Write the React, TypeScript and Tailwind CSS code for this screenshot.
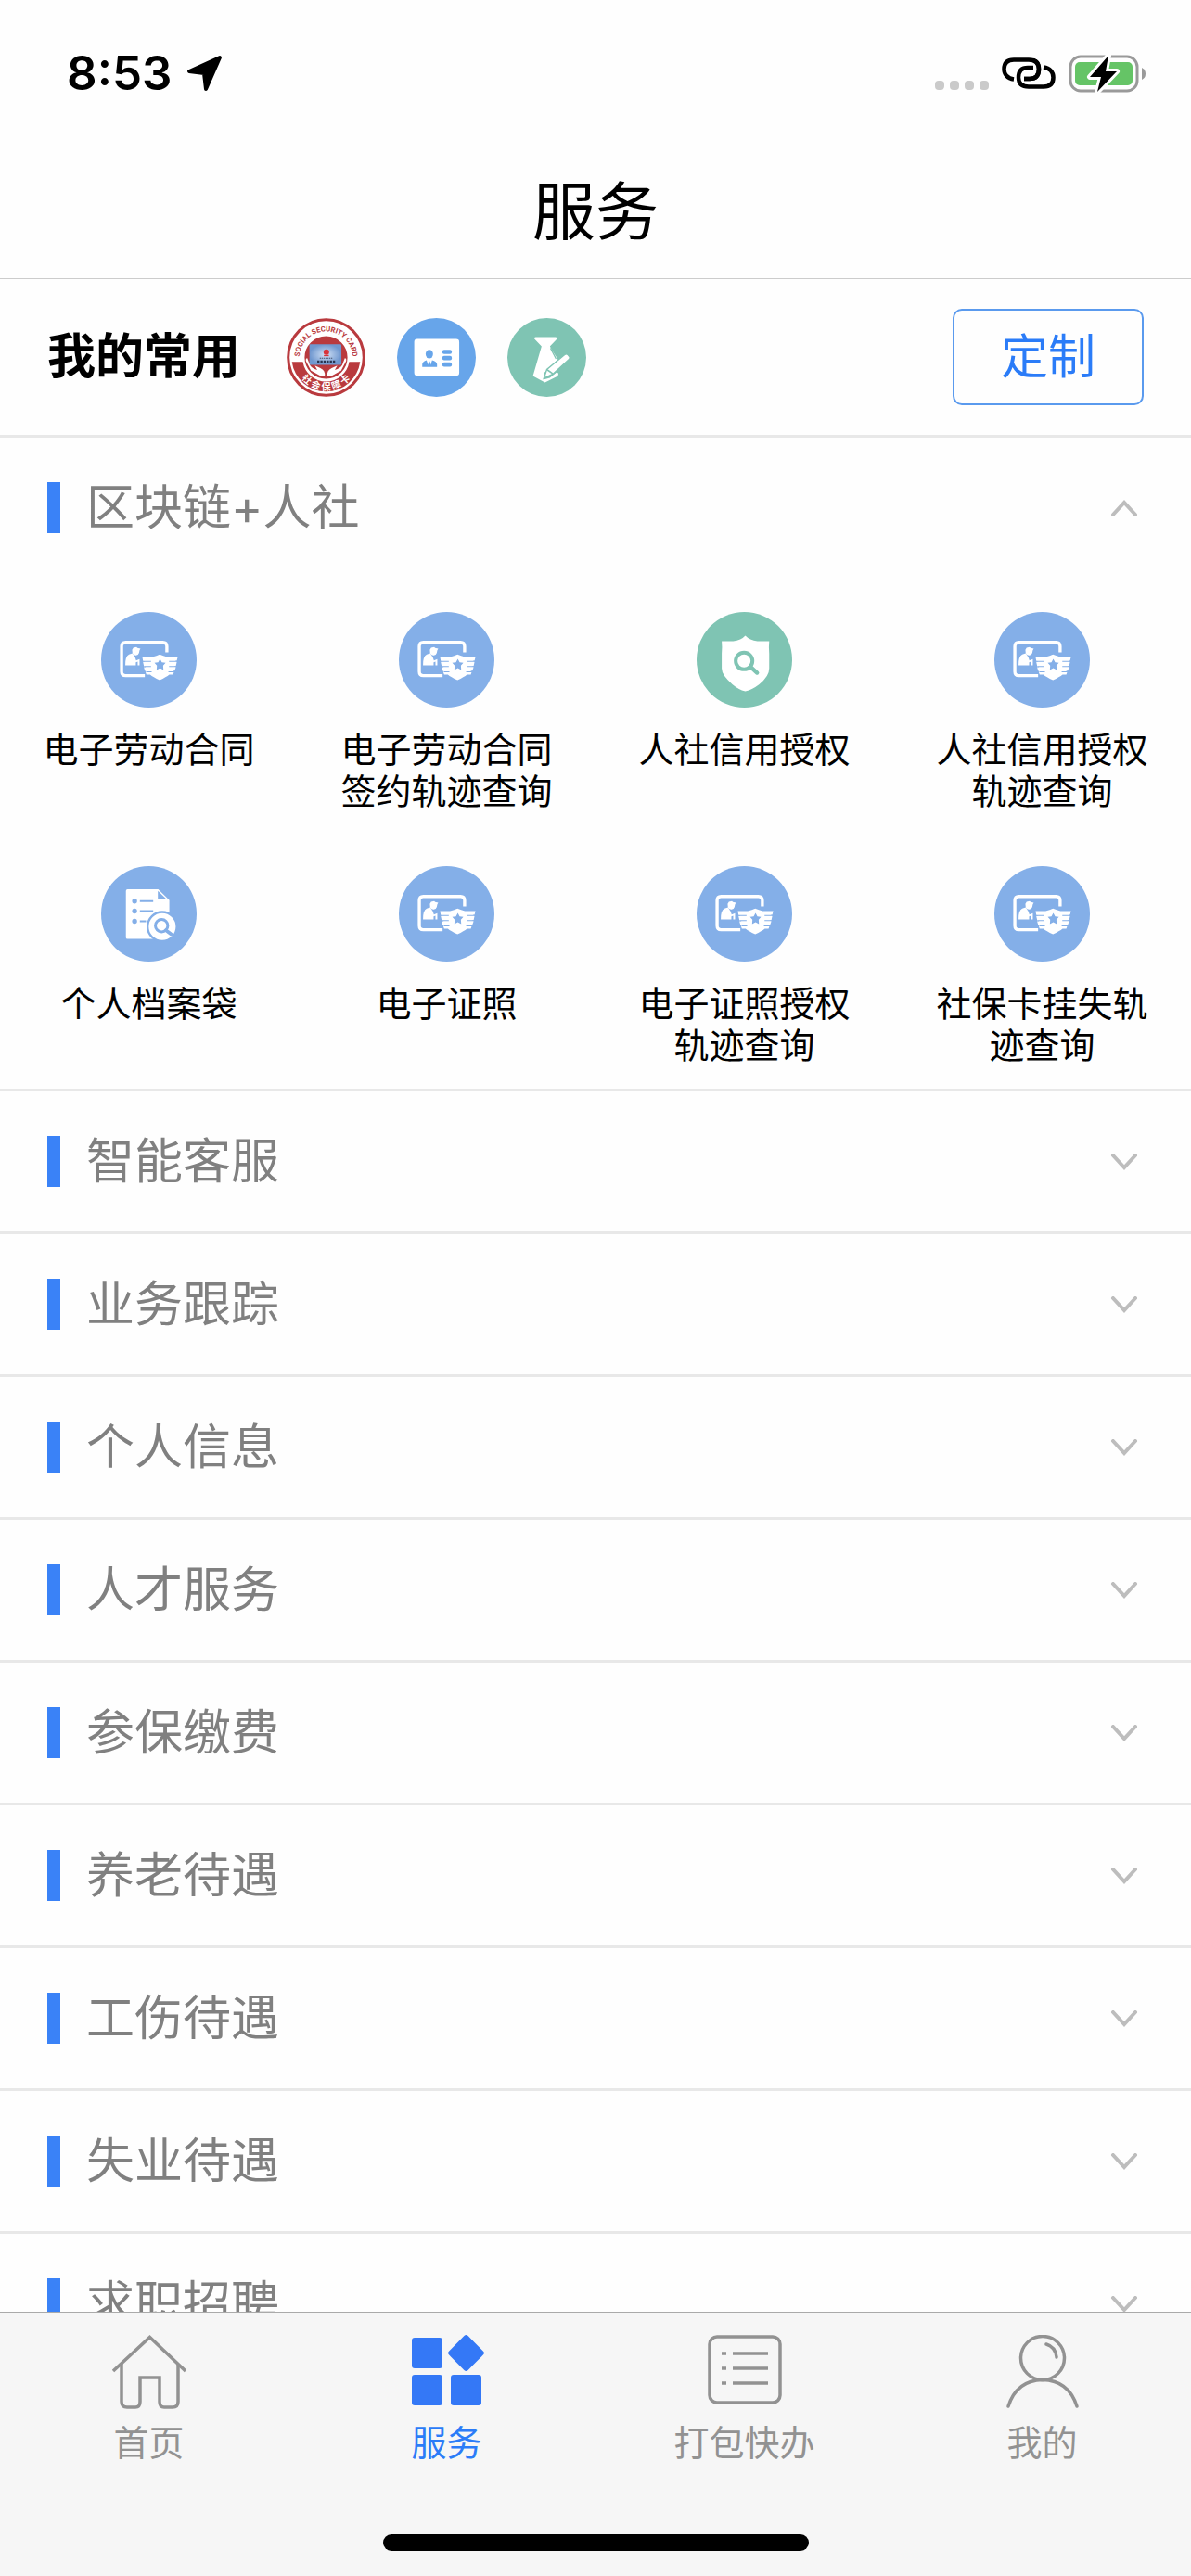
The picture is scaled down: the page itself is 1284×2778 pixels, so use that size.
import { useState } from "react"
import type { ReactNode } from "react"

function SealIcon() {
  return (
    <svg viewBox="0 0 252 252" className="size-[85px]" aria-hidden="true">
      <defs>
        <path id="seal-top" d="M44 150 A85 85 0 1 1 208 150" />
        <path id="seal-bottom" d="M22 126 A104 104 0 0 0 230 126" />
        <radialGradient id="seal-screen">
          <stop offset="0" stopColor="#d3e2f6" />
          <stop offset="1" stopColor="#6f97cf" />
        </radialGradient>
      </defs>
      <circle cx="126" cy="126" r="121" fill="#fff" stroke="#b93a3e" strokeWidth="9" />
      <path d="M17 140 A110 110 0 0 0 235 140 L200 140 A75 75 0 0 1 52 140 Z" fill="#b93a3e" />
      <circle cx="126" cy="126" r="71" fill="#b93a3e" stroke="#fff" strokeWidth="5" />
      <rect x="73" y="84" width="102" height="66" rx="4" fill="url(#seal-screen)" />
      <circle cx="127" cy="109" r="9" fill="#d8343b" />
      <path d="M119 120 h16" stroke="#d8343b" strokeWidth="4" />
      <path d="M106 128 h42" stroke="#44526e" strokeWidth="3" strokeDasharray="4 2" />
      <path d="M98 139 h60" stroke="#28334f" strokeWidth="6" strokeDasharray="7 3" />
      <path d="M66 128 q-6 0 -4 10 l16 30 l28 16 l16 0 q2 -16 -14 -24 l-18 -8 l8 14 q-18 -4 -24 -16 z" fill="#fff" />
      <path d="M186 128 q6 0 4 10 l-16 30 l-28 16 l-16 0 q-2 -16 14 -24 l18 -8 l-8 14 q18 -4 24 -16 z" fill="#fff" />
      <text fill="#b93a3e" fontSize="23" fontWeight="700" fontFamily="Roboto, sans-serif">
        <textPath href="#seal-top" startOffset="50%" textAnchor="middle">SOCIAL SECURITY CARD</textPath>
      </text>
      <text fill="#fff" fontSize="30" fontWeight="700" fontFamily="Noto Sans CJK SC, sans-serif">
        <textPath href="#seal-bottom" startOffset="50%" textAnchor="middle">社 会 保 障 卡</textPath>
      </text>
    </svg>
  )
}

function IdCardIcon() {
  return (
    <svg viewBox="0 0 256 256" className="size-[85px]" aria-hidden="true">
      <circle cx="128" cy="128" r="128" fill="#67a5ea" />
      <rect x="56" y="68" width="146" height="120" rx="10" fill="#fff" />
      <g fill="#67a5ea">
        <ellipse cx="105" cy="117" rx="12" ry="14" />
        <path d="M82 159 v-9 q1 -9 14 -13 l5 15 l2 -11 h4 l2 11 l5 -15 q15 4 16 13 v9 z" />
        <rect x="147" y="103" width="31" height="14" rx="6" />
        <rect x="147" y="123" width="31" height="14" rx="6" />
        <rect x="147" y="144" width="31" height="14" rx="6" />
      </g>
    </svg>
  )
}

function TieIcon() {
  return (
    <svg viewBox="0 0 256 256" className="size-[85px]" aria-hidden="true">
      <circle cx="128" cy="128" r="128" fill="#7fc4b3" />
      <path d="M92 62 h64 q8 0 5 6 l-23 24 l8 14 l18 28 l-44 44 l-4 22 l22 -6 l22 -18 l6 4 l-2 8 l-42 21 l-39 -21 l28 -96 l-23 -24 q-3 -6 4 -6 z" fill="#fff" />
      <path d="M140 98 l18 34" stroke="#7fc4b3" strokeWidth="4" />
      <path d="M186 119 q5 -5 10 0 l5 6 q4 5 -1 9 l-51 47 l-30 14 l9 -28 z" fill="#fff" stroke="#7fc4b3" strokeWidth="4" />
      <path d="M129 168 l19 13" stroke="#7fc4b3" strokeWidth="5" />
    </svg>
  )
}

function ContractIcon() {
  return (
    <svg viewBox="0 0 308 308" className="size-[103px]" aria-hidden="true">
      <circle cx="154" cy="154" r="154" fill="#84afe8" />
      <path d="M141 205 H79 q-13 0 -13 -13 V111 q0 -13 13 -13 H199 q13 0 13 13 V130" fill="none" stroke="#fff" strokeWidth="10" />
      <path d="M100 122 l4 -7 l10 -2 l3 3 l10 2 l-3 5 l-2 9 q-3 9 -11 8 q-8 0 -10 -8 z" fill="#fff" />
      <path d="M78 172 q-1 -28 12 -35 l11 -4 q10 13 12 23 l11 -4 v20 h-6 v-12 l-6 2 v10 z" fill="#fff" />
      <path d="M133 145 h32 q14 -3 24 -8 q12 5 24 8 h34 l-3 12 h-5 l5 4 l-3 13 h-5 l5 4 l-4 11 h-6 l4 4 l-3 9 h-12 q-10 8 -31 18 q-22 -10 -31 -18 h-12 l-3 -9 h5 l-7 -4 l-3 -11 h7 l-7 -4 l-3 -13 h6 l-6 -4 z" fill="#fff" />
      <path d="M136 159 h25 M140 176 h21 M146 193 h17 M219 159 h26 M219 176 h22 M217 193 h19" stroke="#84afe8" strokeWidth="3" />
      <path d="M190 151 l6 11 l12 2 l-8 9 l1 14 l-11 -6 l-11 6 l1 -14 l-8 -9 l12 -2 z" fill="#84afe8" />
    </svg>
  )
}

function ShieldSearchIcon() {
  return (
    <svg viewBox="0 0 308 308" className="size-[103px]" aria-hidden="true">
      <circle cx="154" cy="154" r="154" fill="#7fc4b3" />
      <path d="M157 76 q14 15 39 18 h38 q-2 20 0 40 v48 q0 26 -32 51 q-22 17 -45 23 q-22 -6 -42 -23 q-34 -29 -34 -51 v-48 q2 -20 0 -40 h37 q26 -3 39 -18 z" fill="#fff" />
      <circle cx="153" cy="158" r="27" fill="none" stroke="#7fc4b3" strokeWidth="12" />
      <path d="M173 176 l22 20" stroke="#7fc4b3" strokeWidth="13" strokeLinecap="round" />
    </svg>
  )
}

function ArchiveIcon() {
  return (
    <svg viewBox="0 0 308 308" className="size-[103px]" aria-hidden="true">
      <circle cx="154" cy="154" r="154" fill="#84afe8" />
      <path d="M85 75 H184 L220 110 V235 H85 q-5 0 -5 -5 V80 q0 -5 5 -5 z" fill="#fff" />
      <path d="M183 80 V103 q0 5 5 5 H212 z" fill="#84afe8" />
      <g fill="#84afe8">
        <circle cx="108" cy="113" r="8" />
        <circle cx="108" cy="145" r="8" />
        <circle cx="108" cy="178" r="8" />
      </g>
      <path d="M125 113 h43 M125 145 h43 M125 178 h20" stroke="#84afe8" strokeWidth="6" />
      <circle cx="197" cy="195" r="47" fill="#fff" stroke="#84afe8" strokeWidth="7" />
      <circle cx="195" cy="192" r="20" fill="none" stroke="#84afe8" strokeWidth="9" />
      <path d="M209 207 l17 13" stroke="#84afe8" strokeWidth="11" strokeLinecap="round" />
    </svg>
  )
}

function Chevron({ open }: { open: boolean }) {
  return (
    <svg viewBox="0 0 30 18" className="h-[18px] w-[30px]" aria-hidden="true">
      <path
        d={open ? "M3 16 L15 3 L27 16" : "M3 2 L15 15 L27 2"}
        fill="none"
        stroke="#bdbdbd"
        strokeWidth="4"
        strokeLinecap="round"
      />
    </svg>
  )
}

function StatusBar() {
  return (
    <div className="flex items-center justify-between pt-[54px] pr-12 pl-[72px]">
      <div className="flex items-center gap-4">
        <span className="text-[51px] leading-[50px] font-semibold">8:53</span>
        <svg viewBox="0 0 40 40" className="size-10" aria-hidden="true">
          <path d="M36 3 L3 18 L19 20 L21 37 Z" fill="#000" stroke="#000" strokeWidth="4" strokeLinejoin="round" />
        </svg>
      </div>
      <div className="flex items-center">
        <div className="mt-[26px] mr-[14px] flex gap-[6px]">
          {[0, 1, 2, 3].map((dot) => (
            <span key={dot} className="size-[10px] rounded-[4px] bg-[#cacaca]" />
          ))}
        </div>
        <svg viewBox="0 0 58 34" className="mr-[14px] h-[34px] w-[58px]" aria-hidden="true">
          <g fill="none" stroke="#000" strokeWidth="4.5">
            <path d="M13 23.5 C6 22.5 2.5 18 2.5 12.5 Q2.5 2.5 13 2.5 H29 Q40 2.5 40 12.5 Q40 23 30 23 H24" />
            <path d="M45 10.5 C52 11.5 55.5 16 55.5 21.5 Q55.5 31.5 45 31.5 H29 Q18 31.5 18 21.5 Q18 11 28 11 H34" stroke="#fff" strokeWidth="8" />
            <path d="M45 10.5 C52 11.5 55.5 16 55.5 21.5 Q55.5 31.5 45 31.5 H29 Q18 31.5 18 21.5 Q18 11 28 11 H34" />
            <path d="M34 2.9 Q40 5 40 12.5 Q40 23 30 23 H24" />
          </g>
        </svg>
        <svg viewBox="0 0 84 41" className="h-[41px] w-[84px]" aria-hidden="true">
          <rect x="2" y="2" width="72" height="37" rx="11" fill="none" stroke="#9a9a9a" strokeWidth="3" />
          <path d="M79 14 q4 2 4 6.500 q0 4.500 -4 6.500 z" fill="#9a9a9a" />
          <rect x="7" y="8" width="62" height="25" rx="5" fill="#65c466" />
          <path
            d="M43 1 L23 24 H35 L31 40 L52 18 H40 Z"
            fill="#000"
            stroke="#fff"
            strokeWidth="6"
            strokeLinejoin="round"
            paintOrder="stroke"
          />
        </svg>
      </div>
    </div>
  )
}

const services: { label: string; icon: ReactNode }[] = [
  { label: "电子劳动合同", icon: <ContractIcon /> },
  { label: "电子劳动合同签约轨迹查询", icon: <ContractIcon /> },
  { label: "人社信用授权", icon: <ShieldSearchIcon /> },
  { label: "人社信用授权轨迹查询", icon: <ContractIcon /> },
  { label: "个人档案袋", icon: <ArchiveIcon /> },
  { label: "电子证照", icon: <ContractIcon /> },
  { label: "电子证照授权轨迹查询", icon: <ContractIcon /> },
  { label: "社保卡挂失轨迹查询", icon: <ContractIcon /> },
]

const sections = [
  "区块链+人社",
  "智能客服",
  "业务跟踪",
  "个人信息",
  "人才服务",
  "参保缴费",
  "养老待遇",
  "工伤待遇",
  "失业待遇",
  "求职招聘",
]

const tabs: { label: string; icon: ReactNode }[] = [
  {
    label: "首页",
    icon: (
      <svg viewBox="0 0 80 80" className="size-20" fill="none" stroke="currentColor" strokeWidth="3.5" aria-hidden="true">
        <path d="M1 39 L40.500 2.500 L79 39" />
        <path d="M10 31 V72 Q10 78 16 78 H25 Q30 78 30 72 V46 H51 V72 Q51 78 56 78 H65 Q71 78 71 72 V31" />
      </svg>
    ),
  },
  {
    label: "服务",
    icon: (
      <svg viewBox="0 0 80 80" className="size-20" fill="#3478f6" aria-hidden="true">
        <rect x="2" y="3" width="33" height="33" rx="3" />
        <rect x="2" y="43" width="33" height="33" rx="3" />
        <rect x="44" y="43" width="33" height="33" rx="3" />
        <rect x="46" y="5" width="29" height="29" rx="3" transform="rotate(45 60.500 19.500)" />
      </svg>
    ),
  },
  {
    label: "打包快办",
    icon: (
      <svg viewBox="0 0 80 80" className="size-20" fill="none" stroke="currentColor" strokeWidth="3.5" aria-hidden="true">
        <rect x="2" y="2" width="76" height="71" rx="8" />
        <path d="M15 20 h5 M27 20 h38 M15 36 h5 M27 36 h38 M15 52 h5 M27 52 h38" />
      </svg>
    ),
  },
  {
    label: "我的",
    icon: (
      <svg viewBox="0 0 80 80" className="size-20" fill="none" stroke="currentColor" strokeWidth="3.5" strokeLinecap="round" aria-hidden="true">
        <circle cx="40" cy="25" r="23.500" />
        <path d="M3 77 Q12 49 40 48.500 Q68 49 77 77" />
        <path d="M44 10 Q54 13 55 24" />
      </svg>
    ),
  },
]

export default function App() {
  const [openSection, setOpenSection] = useState("区块链+人社")
  const [activeTab, setActiveTab] = useState("服务")

  return (
    <div className="flex h-screen flex-col overflow-hidden bg-[#fefefe] font-[Inter,'Noto_Sans_CJK_SC',sans-serif] text-black">
      <header className="shrink-0 border-b border-[#cccccc] pb-8">
        <StatusBar />
        <h1 className="pt-[84px] text-center text-[68px] leading-[80px]">服务</h1>
      </header>

      <main className="min-h-0 flex-1 overflow-y-auto [scrollbar-width:none]">
        <section className="flex items-center justify-between border-b-[3px] border-[#e8e8e8] px-[51px] py-8">
          <div className="flex items-center gap-[34px]">
            <h2 className="mr-4 text-[52px] leading-[60px] font-bold">我的常用</h2>
            <a href="#card" aria-label="社会保障卡"><SealIcon /></a>
            <a href="#identity" aria-label="个人信息"><IdCardIcon /></a>
            <a href="#jobs" aria-label="求职招聘"><TieIcon /></a>
          </div>
          <button className="rounded-[10px] border-2 border-[#5a9aee] px-[50px] py-5 text-[51px] leading-[60px] text-[#2b7cf8]">
            定制
          </button>
        </section>

        {sections.map((title) => {
          const open = openSection === title
          return (
            <section key={title} className="border-b-[3px] border-[#e8e8e8]">
              <button
                className="flex h-[151px] w-full items-center pr-[57px] pl-[51px]"
                aria-expanded={open}
                onClick={() => setOpenSection(open ? "" : title)}
              >
                <span className="mr-7 h-[55px] w-[14px] bg-[#3a82f7]" />
                <span className="flex-1 text-left text-[52px] leading-[60px] text-[#808080]">{title}</span>
                <Chevron open={open} />
              </button>
              {open && (
                <div className="grid grid-cols-4 gap-y-[58px] pt-[37px] pb-6">
                  {services.map((item) => (
                    <a key={item.label} href="#service" className="flex flex-col items-center gap-[23px]">
                      {item.icon}
                      <span className="h-[90px] w-[240px] text-center text-[38px] leading-[45px]">{item.label}</span>
                    </a>
                  ))}
                </div>
              )}
            </section>
          )
        })}
      </main>

      <nav className="shrink-0 border-t border-[#aaaaaa] bg-[#f6f6f6] pt-6 pb-[27px]">
        <div className="grid grid-cols-4">
          {tabs.map((tab) => (
            <button
              key={tab.label}
              className={`flex flex-col items-center gap-[14px] ${activeTab === tab.label ? "text-[#2b7cf8]" : "text-[#929292]"}`}
              onClick={() => setActiveTab(tab.label)}
            >
              {tab.icon}
              <span className="text-[38px] leading-[45px]">{tab.label}</span>
            </button>
          ))}
        </div>
        <div className="mx-auto mt-[76px] h-[18px] w-[459px] rounded-full bg-black" />
      </nav>
    </div>
  )
}
